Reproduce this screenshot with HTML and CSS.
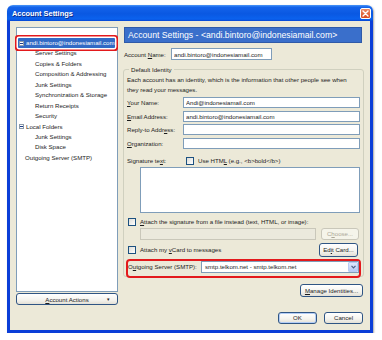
FILE: index.html
```html
<!DOCTYPE html>
<html lang="en">
<head>
    <meta charset="UTF-8">
    <title>Account Settings</title>
    <link rel="stylesheet" href="styles.css">
</head>
<body>
    <div class="window">
        <div class="titlebar">
            <span class="title">Account Settings</span>
            <span class="close">
                <svg width="7" height="7" viewBox="0 0 7 7"><path d="M1 1 L6 6 M6 1 L1 6" stroke="#fff" stroke-width="1.4" stroke-linecap="round"/></svg>
            </span>
        </div>

        <div class="client">
            <div class="sidebar">
                <div class="tree">
                    <div class="node selected"><span class="toggle"></span>andi.bintoro@indonesiamail.com</div>
                    <div class="leaf">Server Settings</div>
                    <div class="leaf">Copies &amp; Folders</div>
                    <div class="leaf">Composition &amp; Addressing</div>
                    <div class="leaf">Junk Settings</div>
                    <div class="leaf">Synchronization &amp; Storage</div>
                    <div class="leaf">Return Receipts</div>
                    <div class="leaf">Security</div>
                    <div class="node"><span class="toggle"></span>Local Folders</div>
                    <div class="leaf">Junk Settings</div>
                    <div class="leaf">Disk Space</div>
                    <div class="node plain">Outgoing Server (SMTP)</div>
                </div>
                <button class="btn actions"><span><u>A</u>ccount Actions</span><span class="caret">&#9662;</span></button>
            </div>

            <div class="main">
                <div class="heading">Account Settings - &lt;andi.bintoro@indonesiamail.com&gt;</div>

                <div class="row account-row">
                    <label class="account-label">Account <u>N</u>ame:</label>
                    <input class="input account-input" value="andi.bintoro@indonesiamail.com">
                </div>

                <fieldset class="group">
                    <legend>Default Identity</legend>
                    <p class="desc">Each account has an identity, which is the information that other people see when they read your messages.</p>

                    <div class="row field">
                        <label><u>Y</u>our Name:</label>
                        <input class="input" value="Andi@indonesiamail.com">
                    </div>
                    <div class="row field">
                        <label><u>E</u>mail Address:</label>
                        <input class="input" value="andi.bintoro@indonesiamail.com">
                    </div>
                    <div class="row field">
                        <label>Reply-to Addr<u>e</u>ss:</label>
                        <input class="input" value="">
                    </div>
                    <div class="row field">
                        <label><u>O</u>rganization:</label>
                        <input class="input" value="">
                    </div>

                    <div class="row sig-row">
                        <label class="sig-label">Signature te<u>x</u>t:</label>
                        <span class="check"></span>
                        <span>Use HTM<u>L</u> (e.g., &lt;b&gt;bold&lt;/b&gt;)</span>
                    </div>
                    <textarea class="sig-text"></textarea>

                    <div class="row attach-row">
                        <span class="check"></span>
                        <span><u>A</u>ttach the signature from a file instead (text, HTML, or image):</span>
                    </div>
                    <div class="row file-row">
                        <div class="file-field"></div>
                        <button class="btn disabled">C<u>h</u>oose...</button>
                    </div>

                    <div class="row vcard-row">
                        <span class="check"></span>
                        <span class="vcard-text">Attach my <u>v</u>Card to messages</span>
                        <button class="btn edit-card">Ed<u>i</u>t Card...</button>
                    </div>

                    <div class="row smtp-row">
                        <label class="smtp-label">O<u>u</u>tgoing Server (SMTP):</label>
                        <div class="combo">
                            <span class="combo-text">smtp.telkom.net - smtp.telkom.net</span>
                            <span class="combo-arrow">
                                <svg width="5" height="4" viewBox="0 0 5 4"><path d="M0.5 0.8 L2.5 2.8 L4.5 0.8" fill="none" stroke="#4d6185" stroke-width="1.2"/></svg>
                            </span>
                        </div>
                    </div>
                </fieldset>

                <div class="manage-row">
                    <button class="btn manage"><u>M</u>anage Identities...</button>
                </div>

                <div class="footer">
                    <button class="btn dialog-btn ok">OK</button>
                    <button class="btn dialog-btn">Cancel</button>
                </div>
            </div>
        </div>
    </div>
</body>
</html>
```

FILE: styles.css
```css
:root {
    --xp-face: #ece9d8;
    --xp-frame: #0b3ed8;
    --xp-field: #7f9db9;
    --xp-select: #316ac5;
    --marker: #e3191c;
}

* {
    box-sizing: border-box;
    margin: 0;
    padding: 0;
}

body {
    background: #fff;
    font-family: "Liberation Sans", Arial, sans-serif;
    font-size: 6.1px;
    color: #1c1c1c;
}

u {
    text-decoration-thickness: 0.5px;
    text-underline-offset: 1px;
}

/* window frame */
.window {
    margin: 5px 0 0 7px;
    width: 366px;
    height: 328px;
    display: flex;
    flex-direction: column;
    box-shadow: 1px 1px 2px rgba(0,0,0,0.35);
    border-radius: 6px 6px 0 0;
}

.titlebar {
    height: 16px;
    border-radius: 6px 6px 0 0;
    background: linear-gradient(to bottom, #4a96f8 0%, #1463ea 14%, #0a58e2 55%, #0b62ee 88%, #0545d2 100%);
    display: flex;
    align-items: center;
    justify-content: space-between;
    padding: 0 2px 0 5px;
}

.title {
    color: #fff;
    font-weight: bold;
    font-size: 7.4px;
    text-shadow: 1px 1px 0 #0a2a8a;
}

.close {
    width: 11px;
    height: 11px;
    border: 1px solid #fff;
    border-radius: 2px;
    background: linear-gradient(to bottom, #ec8a66, #d94a20);
    display: flex;
    align-items: center;
    justify-content: center;
}

.client {
    flex: 1;
    display: flex;
    gap: 5px;
    background: var(--xp-face);
    border: 3px solid var(--xp-frame);
    border-top: none;
    padding: 6px 6px 0 6px;
}

/* left tree */
.sidebar {
    width: 102px;
    display: flex;
    flex-direction: column;
}

.tree {
    height: 265px;
    background: #fff;
    border: 1px solid var(--xp-field);
    padding-top: 10px;
}

.node,
.leaf {
    height: 10.45px;
    line-height: 10.45px;
    white-space: nowrap;
}

.node {
    display: flex;
    align-items: center;
    padding-left: 2px;
}

.node.plain {
    padding-left: 8px;
}

.leaf {
    padding-left: 18px;
}

.toggle {
    width: 5px;
    height: 5px;
    border: 1px solid #8c9aa8;
    background: #fff;
    margin-right: 2px;
    position: relative;
}

.toggle::after {
    content: "";
    position: absolute;
    left: 0;
    top: 1px;
    width: 3px;
    height: 1px;
    background: #1b3d8a;
}

.node.selected {
    margin: 0 2px 0 1px;
    padding-left: 1px;
    background: var(--xp-select);
    color: #fff;
    border-radius: 1px;
    box-shadow: 0 0 0 1.5px #fff, 0 0 0 3px var(--marker);
}

/* buttons */
.btn {
    font: inherit;
    color: #1c1c1c;
    border: 1px solid #2f5584;
    border-radius: 3px;
    background: linear-gradient(to bottom, #ffffff 0%, #f4f3ee 60%, #e3e0d6 100%);
    display: flex;
    align-items: center;
    justify-content: center;
}

.btn.disabled {
    color: #aca899;
    border-color: #c9c7ba;
    background: #f5f4ea;
}

.actions {
    margin-top: 1px;
    height: 12px;
    position: relative;
}

.caret {
    position: absolute;
    right: 7px;
    top: 2px;
    font-size: 5px;
}

/* right panel */
.main {
    flex: 1;
    display: flex;
    flex-direction: column;
}

.heading {
    height: 16px;
    margin: 0 2px 0 1px;
    background: #3a6fcb;
    border: 1px solid #2f5aa8;
    color: #fff;
    font-size: 8.7px;
    line-height: 14px;
    padding-left: 3px;
    white-space: nowrap;
}

.row {
    display: flex;
    align-items: center;
}

.input {
    font: inherit;
    color: #1c1c1c;
    border: 1px solid var(--xp-field);
    background: #fff;
    padding: 0 2px;
    outline: none;
}

.account-row {
    margin-top: 5px;
    height: 12px;
}

.account-label {
    width: 47px;
    margin-left: 1px;
}

.account-input {
    width: 101px;
    height: 12px;
}

.group {
    margin-top: 6px;
    border: 1px solid #d0d0bf;
    border-radius: 3px;
    padding: 1px 3px 0 3px;
}

.group legend {
    margin-left: 2px;
    padding: 0 2px;
    line-height: 7px;
}

.desc {
    width: 229px;
    line-height: 10px;
    margin-top: 1px;
}

.field {
    height: 11px;
    margin-top: 2.67px;
}

.field:first-of-type {
    margin-top: 2px;
}

.field label {
    width: 56px;
}

.field .input {
    flex: 1;
    height: 11px;
}

.check {
    width: 8px;
    height: 8px;
    border: 1px solid #1c5180;
    background: linear-gradient(135deg, #dcdcd7, #fff);
    margin-right: 4px;
    flex: none;
}

.sig-row {
    height: 11px;
    margin-top: 6.5px;
}

.sig-label {
    width: 59px;
}

.sig-text {
    display: block;
    width: 220px;
    height: 46px;
    margin: 0.5px 0 0 13px;
    border: 1px solid var(--xp-field);
    resize: none;
}

.attach-row {
    height: 10px;
    margin-top: 4px;
    padding-left: 1px;
}

.file-row {
    margin-top: 1px;
    height: 12px;
    padding-left: 13px;
    gap: 5px;
}

.file-field {
    width: 176px;
    height: 12px;
    border: 1px solid #c9c7ba;
    background: #ebe9dd;
}

.file-row .btn {
    width: 38px;
    height: 12px;
}

.vcard-row {
    margin-top: 3px;
    height: 14px;
    padding-left: 1px;
}

.vcard-text {
    flex: 1;
}

.edit-card {
    width: 39px;
    height: 14px;
    margin-right: 2px;
}

.smtp-row {
    position: relative;
    z-index: 1;
    margin: 2px -1px -2px -1px;
    height: 19px;
    border: 2px solid var(--marker);
    border-radius: 4px;
    align-items: flex-start;
}

.smtp-label {
    width: 73px;
    line-height: 12px;
}

.combo {
    flex: 1;
    height: 12px;
    border: 1px solid var(--xp-field);
    background: #fff;
    display: flex;
    align-items: center;
    padding-left: 3px;
}

.combo-text {
    flex: 1;
}

.combo-arrow {
    width: 10px;
    height: 10px;
    border: 1px solid #b9cbf3;
    border-radius: 1px;
    background: linear-gradient(to bottom, #dfe8fd, #b6cbf8);
    display: flex;
    align-items: center;
    justify-content: center;
}

.manage-row {
    display: flex;
    justify-content: flex-end;
    margin-top: 7px;
}

.manage {
    width: 63px;
    height: 13px;
    margin-right: 1px;
}

.footer {
    display: flex;
    justify-content: flex-end;
    gap: 7px;
    margin-top: 15px;
}

.dialog-btn {
    width: 39px;
    height: 12px;
    margin-right: 1px;
}

.dialog-btn.ok {
    box-shadow: inset 0 0 0 1px #b3cdf6;
    margin-right: 0;
}
```
